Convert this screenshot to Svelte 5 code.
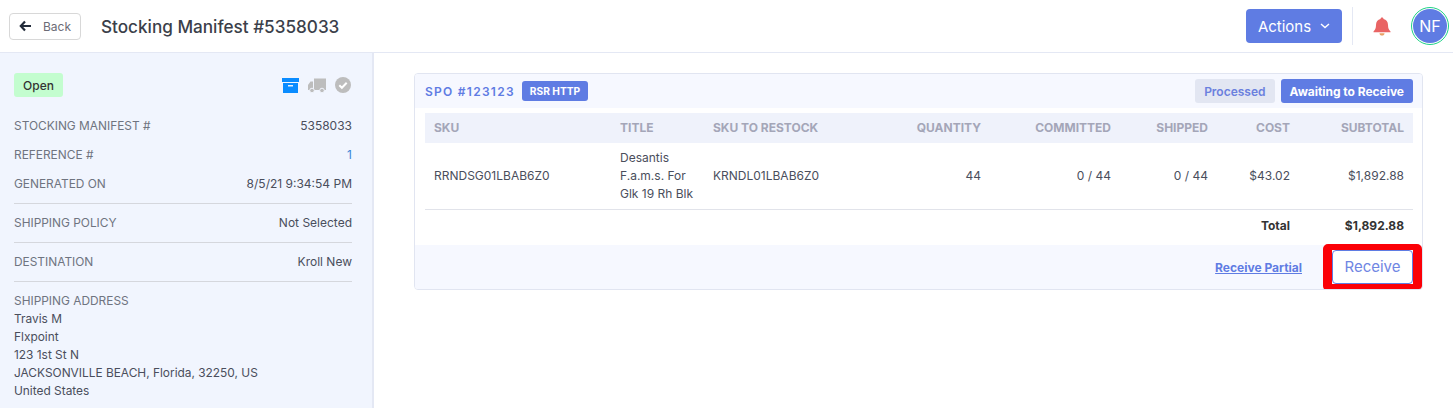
<script>
    const details = [
        { rows: [["STOCKING MANIFEST #", "5358033"], ["REFERENCE #", "1", true], ["GENERATED ON", "8/5/21 9:34:54 PM"]] },
        { rows: [["SHIPPING POLICY", "Not Selected"]] },
        { rows: [["DESTINATION", "Kroll New"]] },
    ];
    const address = ["Travis M", "Flxpoint", "123 1st St N", "JACKSONVILLE BEACH, Florida, 32250, US", "United States"];
</script>

<div class="page">
    <!-- Top bar -->
    <header class="topbar">
        <button class="back">
            <svg width="12" height="12" viewBox="0 0 12 12"><path d="M6 1.500 1.800 6 6 10.500M2 6h10" fill="none" stroke="#222b3a" stroke-width="2.200" /></svg>
            <span>Back</span>
        </button>
        <h1>Stocking Manifest #5358033</h1>
        <div class="top-right">
            <button class="actions">
                Actions
                <svg width="10" height="6" viewBox="0 0 10 6"><path d="M1 1l4 3.600L9 1" fill="none" stroke="#fff" stroke-width="1.400" /></svg>
            </button>
            <div class="vline"></div>
            <svg class="bell" width="18" height="19" viewBox="0 0 18 19">
                <path d="M9 0.500c1 0 1.500.7 1.500 1.600C13.300 2.800 15 5 15 8c0 3.500 1 5 2.500 6.500v.8H.500v-.8C2 13 3 11.500 3 8c0-3 1.700-5.200 4.500-5.900C7.500 1.200 8 .5 9 .5z" fill="#e96464" />
                <path d="M6.500 16.200h5c0 1.400-1.100 2.300-2.500 2.300s-2.500-.9-2.500-2.300z" fill="#e9a064" />
            </svg>
            <div class="avatar"><span>NF</span></div>
        </div>
    </header>

    <div class="content">
        <!-- Left details -->
        <aside class="side">
            <div class="status-row">
                <span class="open">Open</span>
                <div class="status-icons">
                    <svg width="17" height="15" viewBox="0 0 17 15">
                        <path d="M0 0h17v4H0z" fill="#0a8cff" />
                        <path d="M1 5h15v10H1z" fill="#0a8cff" />
                        <path d="M6 7h5v1.500H6z" fill="#e8f2ff" />
                    </svg>
                    <svg width="18" height="15" viewBox="0 0 18 15">
                        <path d="M6 0.500h12v11.500H6z" fill="#bdbdbd" />
                        <path d="M5 3.500H2.500L0 7v5h5z" fill="#bdbdbd" />
                        <circle cx="4" cy="12.500" r="2.300" fill="#bdbdbd" stroke="#f1f5fe" />
                        <circle cx="14" cy="12.500" r="2.300" fill="#bdbdbd" stroke="#f1f5fe" />
                    </svg>
                    <svg width="16" height="16" viewBox="0 0 16 16">
                        <circle cx="8" cy="8" r="8" fill="#bdbdbd" />
                        <path d="M4.300 8.200l2.600 2.600 4.800-5" fill="none" stroke="#fff" stroke-width="2" />
                    </svg>
                </div>
            </div>
            {#each details as group, i}
                <div class="group" class:first={i === 0}>
                    {#each group.rows as row}
                        <div class="info-row">
                            <span class="label">{row[0]}</span>
                            <span class:link={row[2]}>{row[1]}</span>
                        </div>
                    {/each}
                </div>
            {/each}
            <div class="group address">
                <div class="label">SHIPPING ADDRESS</div>
                {#each address as line}
                    <div>{line}</div>
                {/each}
            </div>
        </aside>

        <!-- Main -->
        <main class="main">
            <section class="card">
                <div class="card-head">
                    <span class="spo">SPO #123123</span>
                    <span class="tag">RSR HTTP</span>
                    <span class="pill processed">Processed</span>
                    <span class="pill awaiting">Awaiting to Receive</span>
                </div>
                <div class="table-wrap">
                    <table>
                        <thead>
                            <tr>
                                <th class="c-sku">SKU</th>
                                <th class="c-title">TITLE</th>
                                <th class="c-restock">SKU TO RESTOCK</th>
                                <th class="r c-qty">QUANTITY</th>
                                <th class="r c-com">COMMITTED</th>
                                <th class="r c-ship">SHIPPED</th>
                                <th class="r c-cost">COST</th>
                                <th class="r c-sub">SUBTOTAL</th>
                            </tr>
                        </thead>
                        <tbody>
                            <tr class="item">
                                <td>RRNDSG01LBAB6Z0</td>
                                <td>Desantis F.a.m.s. For Glk 19 Rh Blk</td>
                                <td>KRNDL01LBAB6Z0</td>
                                <td class="r">44</td>
                                <td class="r">0 / 44</td>
                                <td class="r">0 / 44</td>
                                <td class="r">$43.02</td>
                                <td class="r">$1,892.88</td>
                            </tr>
                            <tr class="total">
                                <td colspan="7" class="r">Total</td>
                                <td class="r">$1,892.88</td>
                            </tr>
                        </tbody>
                    </table>
                </div>
                <div class="card-foot">
                    <a href="#partial" class="partial">Receive Partial</a>
                    <div class="highlight">
                        <button class="receive">Receive</button>
                    </div>
                </div>
            </section>
        </main>
    </div>
</div>

<style>
    :global(body) {
        margin: 0;
        background: #fff;
    }

    .page {
        height: 408px;
        overflow: hidden;
        font-family: Inter, "Liberation Sans", sans-serif;
        color: #3f4254;
        font-size: 12px;
    }

    button {
        font-family: inherit;
        cursor: pointer;
    }

    /* Top bar */
    .topbar {
        height: 52px;
        border-bottom: 1px solid #e4e8f4;
        display: flex;
        align-items: center;
        padding: 0 4px 0 9px;
    }

    .back {
        width: 72px;
        height: 27px;
        padding: 0 0 0 9px;
        display: flex;
        align-items: center;
        gap: 12px;
        background: #fff;
        border: 1px solid #d8d8d8;
        border-radius: 4px;
        font-size: 12px;
        color: #6c6c76;
    }

    h1 {
        margin: 0 0 0 20px;
        font-size: 17.150px;
        font-weight: 500;
        color: #3b3f4a;
    }

    .top-right {
        margin-left: auto;
        display: flex;
        align-items: center;
    }

    .actions {
        width: 96px;
        height: 34px;
        background: #5f7ce3;
        border: none;
        border-radius: 4px;
        color: #fff;
        font-size: 15px;
        display: flex;
        align-items: center;
        justify-content: center;
        gap: 9px;
    }

    .vline {
        width: 1px;
        height: 38px;
        background: #e4e8f4;
        margin: 0 20px 0 10px;
    }

    .bell {
        margin-right: 20px;
    }

    .avatar {
        width: 38px;
        height: 38px;
        box-sizing: border-box;
        border: 1.500px solid #1fd286;
        border-radius: 50%;
        padding: 1px;
        background: #fff;
    }

    .avatar span {
        display: flex;
        width: 100%;
        height: 100%;
        align-items: center;
        justify-content: center;
        background: #5f7ce3;
        border-radius: 50%;
        color: #fff;
        font-size: 16px;
    }

    .content {
        display: flex;
        height: 355px;
    }

    /* Sidebar */
    .side {
        width: 374px;
        flex: none;
        box-sizing: border-box;
        background: #f1f5fe;
        border-right: 2px solid #e4e8f4;
        padding: 20px 20px 0 14px;
        color: #4a4e5c;
    }

    .status-row {
        display: flex;
        justify-content: space-between;
        align-items: center;
        height: 24px;
    }

    .open {
        width: 49px;
        height: 24px;
        display: flex;
        align-items: center;
        justify-content: center;
        background: #c3fdcf;
        border-radius: 3px;
        font-size: 12px;
        font-weight: 500;
        color: #333;
    }

    .status-icons {
        display: flex;
        align-items: center;
        gap: 9px;
        padding-right: 1px;
    }

    .group {
        border-bottom: 1px solid #d5d7dd;
        padding: 10px 0;
        line-height: 18px;
    }

    .group.first {
        padding-top: 11px;
        margin-top: 9px;
    }

    .info-row {
        display: flex;
        justify-content: space-between;
    }

    .info-row + .info-row {
        margin-top: 11px;
    }

    .label {
        color: #6f7480;
        font-size: 11.900px;
    }

    .link {
        color: #3a87d8;
    }

    .address {
        border-bottom: none;
        font-size: 11.900px;
    }

    /* Main card */
    .main {
        flex: 1;
        padding: 20px 30px 0 40px;
    }

    .card {
        border: 1px solid #e1e5f1;
        border-radius: 4px;
        overflow: hidden;
    }

    .card-head {
        height: 34px;
        background: #f6f8ff;
        display: flex;
        align-items: center;
        padding: 0 9px 0 10px;
    }

    .spo {
        font-size: 12px;
        font-weight: 600;
        letter-spacing: 1.270px;
        color: #5f7ce3;
    }

    .tag {
        margin-left: 7px;
        height: 20px;
        padding: 0 8px;
        display: flex;
        align-items: center;
        background: #5f7ce3;
        color: #fff;
        font-size: 10.200px;
        font-weight: 700;
        border-radius: 3px;
    }

    .pill {
        height: 24px;
        display: flex;
        align-items: center;
        border-radius: 3px;
        font-weight: 600;
        font-size: 12px;
    }

    .processed {
        margin-left: auto;
        padding: 0 9px;
        background: #e2e6f2;
        color: #6a80de;
    }

    .awaiting {
        margin-left: 6px;
        padding: 0 9px;
        background: #5f7ce3;
        color: #fff;
        font-weight: 700;
        letter-spacing: -0.030px;
    }

    .table-wrap {
        padding: 5px 9px 0 10px;
    }

    table {
        width: 100%;
        border-collapse: collapse;
        table-layout: fixed;
    }

    th {
        height: 30px;
        padding: 0 9px 2px;
        box-sizing: border-box;
        background: #eff2fb;
        color: #a4a6b8;
        font-size: 12px;
        font-weight: 700;
        text-align: left;
    }

    td {
        padding: 0 9px;
        color: #4a4e5c;
    }

    .r {
        text-align: right;
    }

    .c-sku { width: 186px; }
    .c-title { width: 93px; }
    .c-restock { width: 168px; }
    .c-qty { width: 118px; }
    .c-com { width: 130px; }
    .c-ship { width: 97px; }
    .c-cost { width: 82px; }

    .item td {
        height: 66px;
        line-height: 18px;
        border-bottom: 1px solid #e1e3ea;
    }

    .total td {
        height: 35px;
        box-sizing: border-box;
        padding-bottom: 4px;
        font-weight: 700;
        color: #333;
    }

    .card-foot {
        height: 44px;
        background: #f6f8ff;
        display: flex;
        align-items: flex-start;
        justify-content: flex-end;
    }

    .partial {
        margin: 15px 21px 0 0;
        color: #5f7ce3;
        font-weight: 700;
        font-size: 12px;
    }

    .highlight {
        border: solid #fb0007;
        border-width: 6px 9px 7px;
        border-radius: 5px;
        background: #fff;
        margin-top: -1px;
        height: 34px;
        flex: none;
    }

    .receive {
        display: block;
        width: 81px;
        height: 34px;
        background: #fff;
        border: 1px solid #5f7ce3;
        border-radius: 4px;
        color: #6f86e3;
        font-size: 15px;
    }
</style>
